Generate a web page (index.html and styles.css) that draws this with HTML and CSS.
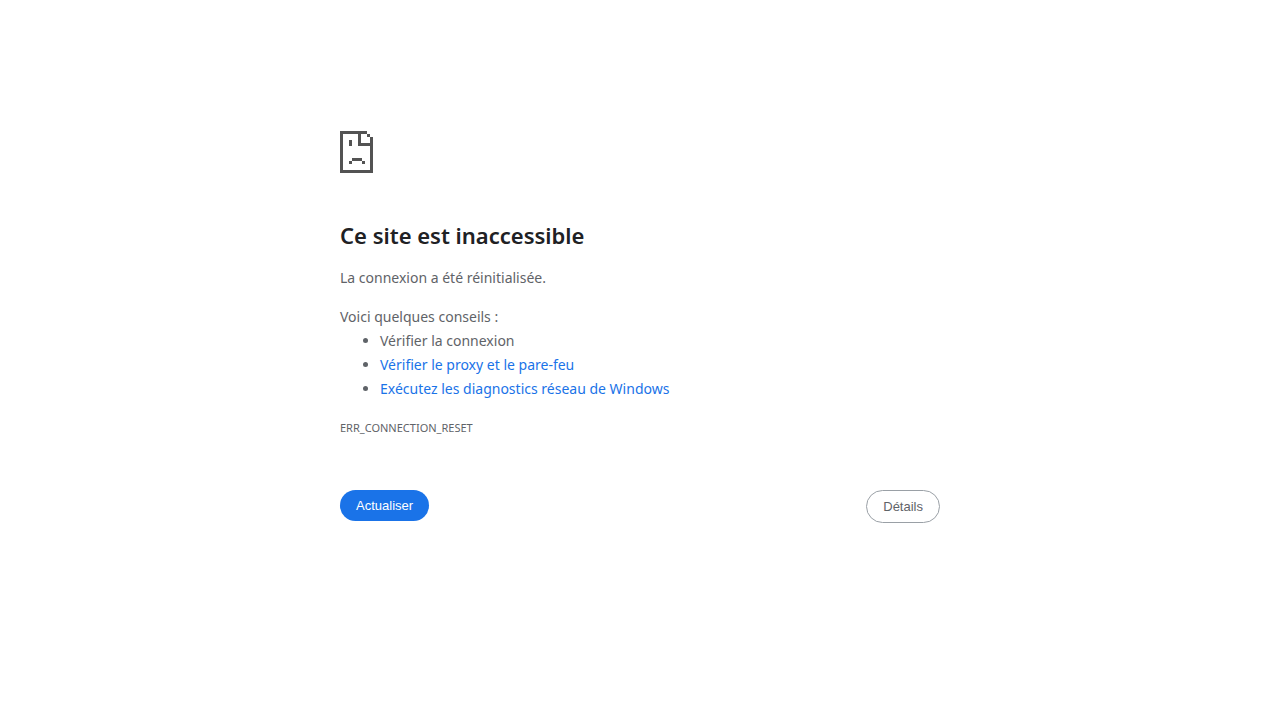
FILE: index.html
```html
<!DOCTYPE html>
<html lang="fr">
<head>
<meta charset="utf-8">
<meta name="viewport" content="width=device-width, initial-scale=1">
<title>Ce site est inaccessible</title>
<link rel="stylesheet" href="styles.css">
</head>
<body>
<main class="error-page">
  <svg class="error-icon" viewBox="0 0 33 42" shape-rendering="crispEdges" aria-hidden="true">
    <path fill="currentColor" d="M0 0h27v3h-6v9h9v-6h3v36h-33zM3 3v36h27v-24h-12v-12zM27 3h3v3h-3zM9 9h3v6h-3zM12 27h10v3h-10zM9 30h3v3h-3zM22 30h3v3h-3z"/>
  </svg>
  <h1 class="error-title">Ce site est inaccessible</h1>
  <p class="error-summary">La connexion a été réinitialisée.</p>
  <div class="suggestions">
    <p class="suggestions-title">Voici quelques conseils :</p>
    <ul class="suggestions-list">
      <li>Vérifier la connexion</li>
      <li><a class="link" href="#proxy">Vérifier le proxy et le pare-feu</a></li>
      <li><a class="link" href="#diagnostics">Exécutez les diagnostics réseau de Windows</a></li>
    </ul>
  </div>
  <p class="error-code">ERR_CONNECTION_RESET</p>
  <div class="actions">
    <button class="button button-primary" type="button">Actualiser</button>
    <button class="button button-secondary" type="button">Détails</button>
  </div>
</main>
</body>
</html>
```
FILE: styles.css
```css
body {
  margin: 0;
  background: #fff;
  color: #5f6368;
  font-family: "Segoe UI", "Noto Sans", "Open Sans", sans-serif;
  font-size: 14px;
  line-height: 24px;
}

.error-page {
  box-sizing: border-box;
  max-width: 600px;
  margin: 0 auto;
  padding-top: 131px;
}

.error-icon {
  display: block;
  width: 33px;
  height: 42px;
  color: #535353;
}

.error-title {
  margin: 48px 0 16px;
  color: #202124;
  font-size: 22px;
  font-weight: 600;
  line-height: 29px;
}

.error-summary,
.suggestions-title {
  margin: 0;
}

.suggestions {
  margin-top: 15px;
}

.suggestions-list {
  margin: 0;
  padding-left: 40px;
}

.link {
  color: #1a73e8;
  text-decoration: none;
}

.error-code {
  margin: 15px 0 0;
  font-size: 11px;
}

.actions {
  display: flex;
  align-items: flex-start;
  justify-content: space-between;
  margin-top: 50px;
}

.button {
  padding: 8px 16px;
  border: 0;
  border-radius: 20px;
  font-family: "Liberation Sans", Arial, sans-serif;
  font-size: 13px;
  line-height: 15px;
  cursor: pointer;
}

.button-primary {
  background: #1a73e8;
  color: #fff;
}

.button-secondary {
  border: 1px solid #9aa0a6;
  background: #fff;
  color: #5f6368;
}
```
